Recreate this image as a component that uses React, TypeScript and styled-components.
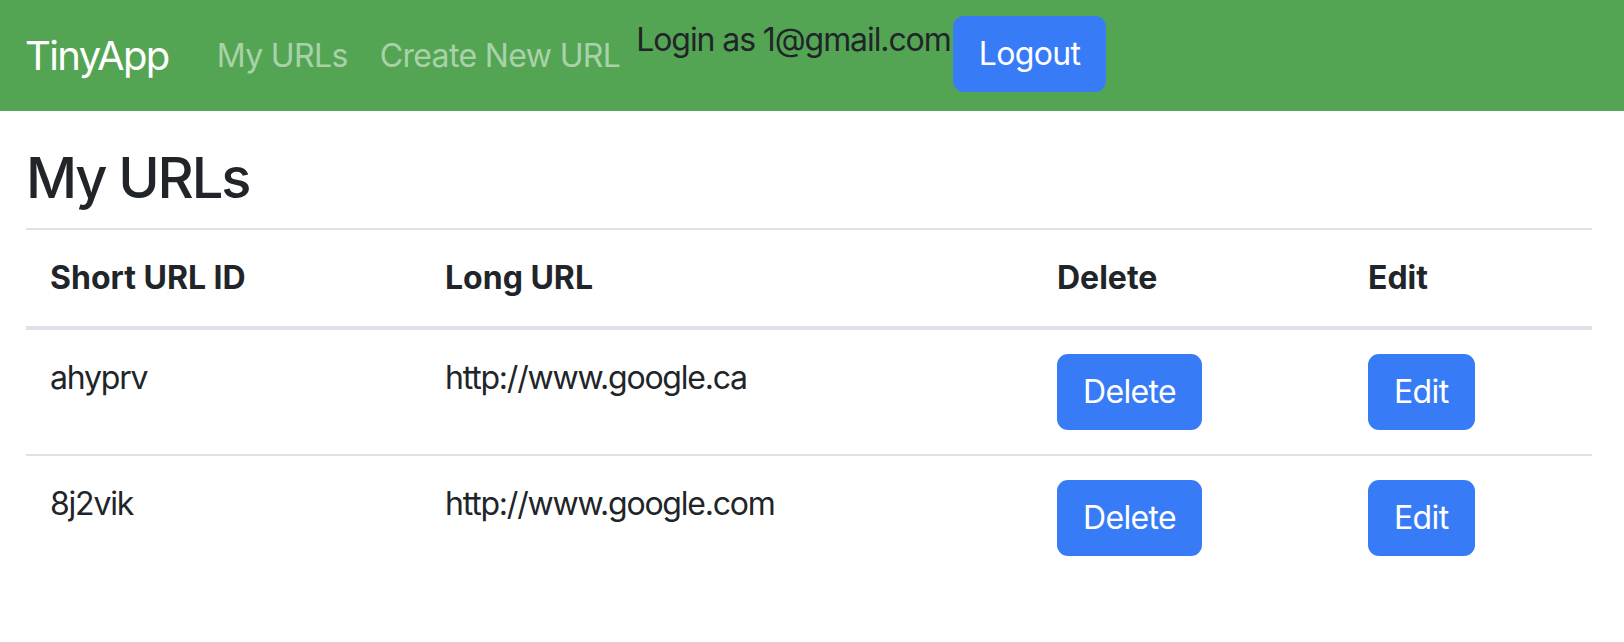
import React from 'react';
import styled, { createGlobalStyle } from 'styled-components';

const GlobalStyle = createGlobalStyle`
  body {
    margin: 0;
    background: #fff;
    color: #212529;
    font-family: Inter, "Noto Sans", "Liberation Sans", sans-serif;
    letter-spacing: -0.04em;
  }
`;

interface UrlEntry {
  id: string;
  longUrl: string;
}

const urls: UrlEntry[] = [
  { id: 'ahyprv', longUrl: 'http://www.google.ca' },
  { id: '8j2vik', longUrl: 'http://www.google.com' },
];

const App: React.FC = () => {
  return (
    <>
      <GlobalStyle />
      <Navbar>
        <Brand href="#">TinyApp</Brand>
        <NavLink href="#">My URLs</NavLink>
        <NavLink href="#">Create New URL</NavLink>
        <UserBox>
          <UserText>Login as 1@gmail.com</UserText>
          <Button type="button">Logout</Button>
        </UserBox>
      </Navbar>

      <Main>
        <Title>My URLs</Title>
        <Table>
          <colgroup>
            <col style={{ width: 395 }} />
            <col style={{ width: 612 }} />
            <col style={{ width: 311 }} />
            <col />
          </colgroup>
          <thead>
            <tr>
              <HeadCell>Short URL ID</HeadCell>
              <HeadCell>Long URL</HeadCell>
              <HeadCell>Delete</HeadCell>
              <HeadCell>Edit</HeadCell>
            </tr>
          </thead>
          <tbody>
            {urls.map((u, i) => (
              <Row key={u.id} $last={i === urls.length - 1}>
                <Cell>{u.id}</Cell>
                <Cell>{u.longUrl}</Cell>
                <Cell>
                  <Button type="button">Delete</Button>
                </Cell>
                <Cell>
                  <Button type="button">Edit</Button>
                </Cell>
              </Row>
            ))}
          </tbody>
        </Table>
      </Main>
    </>
  );
};

const Navbar = styled.nav`
  display: flex;
  align-items: center;
  box-sizing: border-box;
  height: 111px;
  padding: 16px 0 16px 25px;
  background: #53a553;
`;

const Brand = styled.a`
  font-size: 40px;
  line-height: 60px;
  letter-spacing: -0.04em;
  color: #fff;
  text-decoration: none;
  margin-right: 32px;
`;

const NavLink = styled.a`
  font-size: 32px;
  line-height: 48px;
  padding: 0 16px;
  color: rgba(255, 255, 255, 0.5);
  text-decoration: none;
`;

const UserBox = styled.div`
  display: flex;
  align-items: flex-start;
  align-self: flex-start;
`;

const UserText = styled.span`
  font-size: 32px;
  line-height: 48px;
  letter-spacing: -0.034em;
  color: #212529;
  margin-right: 2px;
`;

const Button = styled.button`
  font-family: inherit;
  font-size: 32px;
  line-height: 48px;
  letter-spacing: -0.02em;
  padding: 12px 24px;
  color: #fff;
  background: #387bf6;
  border: 2px solid #387bf6;
  border-radius: 11px;
  cursor: pointer;
`;

const Main = styled.main`
  padding: 0 32px 0 26px;
`;

const Title = styled.h2`
  margin: 34px 0 16px;
  font-size: 56px;
  line-height: 67px;
  font-weight: 500;
  letter-spacing: -0.038em;
`;

const Table = styled.table`
  width: 100%;
  table-layout: fixed;
  border-collapse: collapse;
  border-top: 2px solid #dee2e6;
  font-size: 32px;
  line-height: 48px;
`;

const HeadCell = styled.th`
  text-align: left;
  font-weight: 700;
  letter-spacing: 0;
  padding: 24px;
  border-bottom: 4px solid #dee2e6;
`;

const Row = styled.tr<{ $last?: boolean }>`
  border-bottom: ${(p) => (p.$last ? 'none' : '2px solid #dee2e6')};
`;

const Cell = styled.td`
  padding: 24px;
  vertical-align: top;
  letter-spacing: -0.038em;
`;

export default App;
